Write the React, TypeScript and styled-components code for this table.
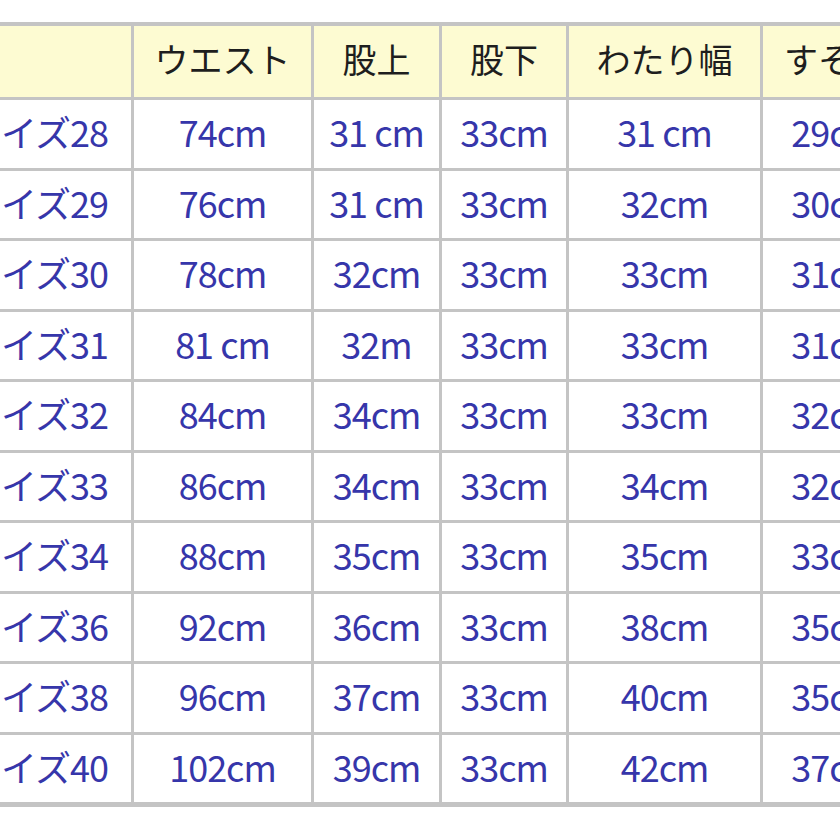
import React from 'react';
import styled, { createGlobalStyle } from 'styled-components';

const GlobalStyle = createGlobalStyle`
  html, body {
    margin: 0;
    padding: 0;
    background: #ffffff;
  }
`;

const Viewport = styled.div`
  width: 840px;
  height: 840px;
  overflow: hidden;
  padding-top: 22px;
  box-sizing: border-box;
`;

const Table = styled.table`
  width: 967px;
  min-width: 967px;
  margin-left: -57px;
  border-collapse: separate;
  border-spacing: 0;
  table-layout: fixed;
  border-top: 4px solid #c4c4c4;
  border-bottom: 5px solid #c4c4c4;
  font-family: "Noto Sans CJK JP", "DejaVu Sans", sans-serif;
`;

const Col = styled.col<{ w: number }>`
  width: ${p => p.w}px;
`;

const HeadCell = styled.th`
  box-sizing: border-box;
  height: 74px;
  padding: 0 0 6px;
  background: #fdfbd2;
  color: #1e1e1e;
  font-size: 34px;
  line-height: 1;
  font-weight: 400;
  text-align: center;
  border-right: 3px solid #c4c4c4;
  border-bottom: 3px solid #c4c4c4;
  white-space: nowrap;
  overflow: hidden;
`;

const Cell = styled.td`
  box-sizing: border-box;
  height: 70.5px;
  padding: 0 0 5px;
  background: #ffffff;
  color: #3636aa;
  font-size: 36px;
  line-height: 1;
  font-weight: 400;
  text-align: center;
  letter-spacing: -1px;
  border-right: 3px solid #c4c4c4;
  border-bottom: 3px solid #c4c4c4;
  white-space: nowrap;
  overflow: hidden;
`;

const LastRow = styled.tr`
  & > td {
    border-bottom: none;
    height: 67.5px;
  }
`;

const columns = [
  { label: '', width: 191 },
  { label: 'ウエスト', width: 180 },
  { label: '股上', width: 128 },
  { label: '股下', width: 127 },
  { label: 'わたり幅', width: 194 },
  { label: 'すそ幅', width: 147 },
];

const rows = [
  ['サイズ28', '74cm', '31 cm', '33cm', '31 cm', '29cm'],
  ['サイズ29', '76cm', '31 cm', '33cm', '32cm', '30cm'],
  ['サイズ30', '78cm', '32cm', '33cm', '33cm', '31cm'],
  ['サイズ31', '81 cm', '32m', '33cm', '33cm', '31cm'],
  ['サイズ32', '84cm', '34cm', '33cm', '33cm', '32cm'],
  ['サイズ33', '86cm', '34cm', '33cm', '34cm', '32cm'],
  ['サイズ34', '88cm', '35cm', '33cm', '35cm', '33cm'],
  ['サイズ36', '92cm', '36cm', '33cm', '38cm', '35cm'],
  ['サイズ38', '96cm', '37cm', '33cm', '40cm', '35cm'],
  ['サイズ40', '102cm', '39cm', '33cm', '42cm', '37cm'],
];

const App: React.FC = () => {
  return (
    <>
      <GlobalStyle />
      <Viewport>
        <Table>
          <colgroup>
            {columns.map((c, i) => (
              <Col key={i} w={c.width} />
            ))}
          </colgroup>
          <thead>
            <tr>
              {columns.map((c, i) => (
                <HeadCell key={i}>{c.label}</HeadCell>
              ))}
            </tr>
          </thead>
          <tbody>
            {rows.map((r, i) => {
              const cells = r.map((v, j) => <Cell key={j}>{v}</Cell>);
              return i === rows.length - 1 ? (
                <LastRow key={r[0]}>{cells}</LastRow>
              ) : (
                <tr key={r[0]}>{cells}</tr>
              );
            })}
          </tbody>
        </Table>
      </Viewport>
    </>
  );
};

export default App;
